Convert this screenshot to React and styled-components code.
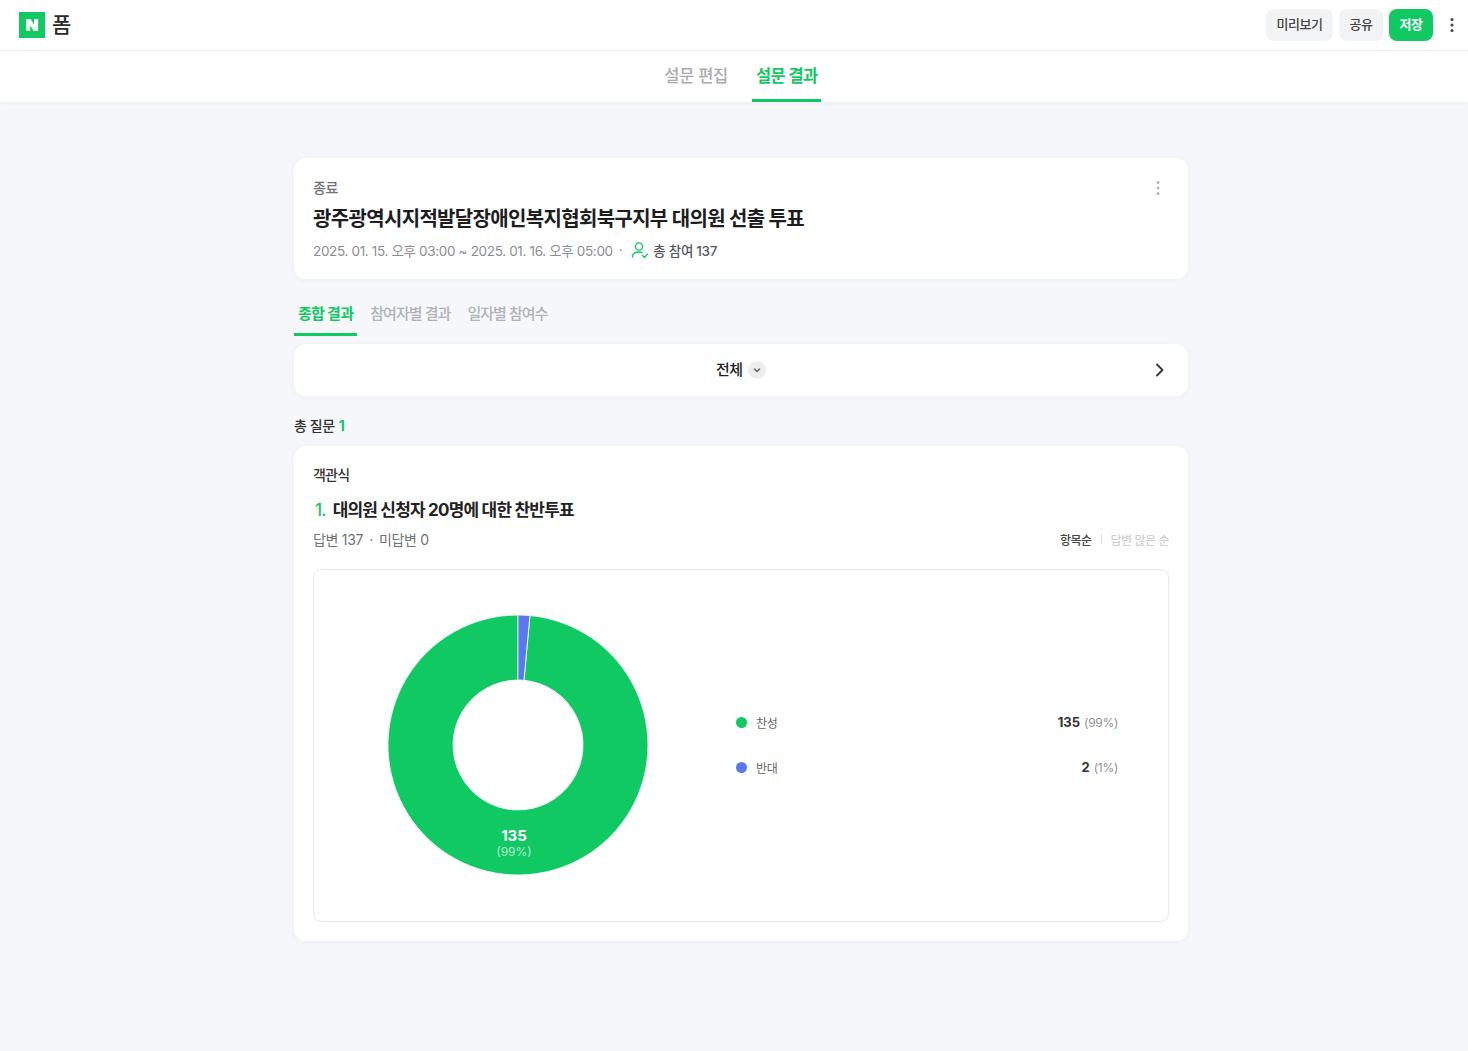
import React from 'react';
import styled, { createGlobalStyle } from 'styled-components';

const GREEN = '#10c963';
const BLUE = '#5a78ea';

const GlobalStyle = createGlobalStyle`
  html, body {
    margin: 0;
    padding: 0;
    background: #f6f7fb;
    font-family: Inter, "Noto Sans CJK KR", "Noto Sans", sans-serif;
    color: #222;
  }
  * { box-sizing: border-box; }
`;

const Page = styled.div`
  width: 1468px;
  min-height: 1051px;
  background: #f6f7fb;
`;

const TopBar = styled.header`
  height: 51px;
  padding: 0 3px 0 19px;
  display: flex;
  align-items: center;
  background: #fff;
  border-bottom: 1px solid #f0f1f3;
`;

const Brand = styled.div`
  display: flex;
  align-items: center;
  gap: 7px;
  flex: 1;
`;

const Logo = styled.svg`
  width: 26px;
  height: 26px;
  display: block;
`;

const BrandName = styled.span`
  font-size: 21px;
  font-weight: 500;
  line-height: 27px;
  padding-bottom: 2px;
  color: #2b2b2b;
`;

const TopActions = styled.div`
  display: flex;
  align-items: center;
  gap: 6px;
`;

const TopButton = styled.button`
  width: ${(p) => p.$w}px;
  height: 32px;
  padding: 0 0 3px;
  border: 0;
  border-radius: 8px;
  font-family: inherit;
  font-size: 13px;
  font-weight: ${(p) => (p.$primary ? 700 : 500)};
  letter-spacing: -0.4px;
  color: ${(p) => (p.$primary ? '#fff' : '#444')};
  background: ${(p) => (p.$primary ? GREEN : '#f2f3f5')};
`;

const MoreBtn = styled.span`
  width: 26px;
  height: 32px;
  display: flex;
  align-items: center;
  justify-content: center;
  color: #444;
`;

const MainTabs = styled.nav`
  height: 51px;
  display: flex;
  justify-content: center;
  gap: 21px;
  padding-left: 14px;
  background: #fff;
  box-shadow: 0 1px 4px rgba(30, 40, 60, 0.05);
`;

const MainTab = styled.div`
  height: 51px;
  padding: 0 3.5px;
  display: flex;
  align-items: center;
  font-size: 16.5px;
  font-weight: ${(p) => (p.$active ? 700 : 500)};
  letter-spacing: ${(p) => (p.$active ? -0.6 : -0.3)}px;
  color: ${(p) => (p.$active ? GREEN : '#a9abae')};
  border-bottom: 3px solid ${(p) => (p.$active ? GREEN : 'transparent')};
`;

const Content = styled.main`
  width: 894px;
  margin: 56px 0 0 294px;
`;

const Card = styled.section`
  background: #fff;
  border-radius: 12px;
  box-shadow: 0 1px 6px rgba(40, 50, 70, 0.05);
`;

const SummaryCard = styled(Card)`
  height: 121px;
  padding: 19px 20px 0 19px;
  position: relative;
`;

const Status = styled.div`
  font-size: 14px;
  font-weight: 500;
  line-height: 21px;
  letter-spacing: -0.4px;
  color: #6f7276;
`;

const Title = styled.h1`
  margin: 7px 0 0;
  font-size: 20px;
  font-weight: 700;
  line-height: 28px;
  letter-spacing: -0.67px;
  color: #1d1d1f;
`;

const MetaRow = styled.div`
  margin-top: 6px;
  display: flex;
  align-items: center;
  height: 22px;
  font-size: 13.5px;
  letter-spacing: -0.34px;
  color: #8b8e92;
`;

const MetaDot = styled.span`
  margin: 0 9px 0 6px;
  color: #8b8e92;
`;

const Joined = styled.span`
  margin-left: 4px;
  color: #55585c;
  letter-spacing: -0.3px;
  font-weight: 500;
`;

const CardMore = styled.span`
  position: absolute;
  top: 19px;
  right: 17px;
  width: 26px;
  height: 22px;
  display: flex;
  align-items: center;
  justify-content: center;
  color: #b5b7ba;
`;

const SubTabs = styled.div`
  margin-top: 16px;
  height: 41px;
  display: flex;
  gap: 9px;
`;

const SubTab = styled.div`
  height: 41px;
  padding: 0 4px 4px;
  display: flex;
  align-items: center;
  font-size: 15px;
  font-weight: ${(p) => (p.$active ? 700 : 500)};
  letter-spacing: ${(p) => (p.$active ? -0.7 : -0.95)}px;
  color: ${(p) => (p.$active ? GREEN : '#b0b2b5')};
  border-bottom: 3px solid ${(p) => (p.$active ? GREEN : 'transparent')};
`;

const FilterCard = styled(Card)`
  margin-top: 8px;
  height: 52px;
  padding: 0 20px 0 0;
  display: flex;
  align-items: center;
  position: relative;
  justify-content: flex-end;
`;

const FilterCenter = styled.div`
  position: absolute;
  left: 422px;
  top: 0;
  height: 48px;
  display: flex;
  align-items: center;
  gap: 6px;
  font-size: 15px;
  font-weight: 500;
  letter-spacing: -0.6px;
  color: #222;
`;

const ChevronBadge = styled.span`
  width: 18px;
  height: 18px;
  margin-top: 3px;
  border-radius: 50%;
  background: #eceded;
  display: flex;
  align-items: center;
  justify-content: center;
  color: #666;
`;

const TotalRow = styled.div`
  margin-top: 19px;
  height: 20px;
  display: flex;
  align-items: center;
  gap: 4px;
  font-size: 14px;
  font-weight: 500;
  letter-spacing: -0.4px;
  color: #333;
`;

const TotalNum = styled.span`
  color: ${GREEN};
  font-weight: 700;
`;

const QuestionCard = styled(Card)`
  margin-top: 11px;
  height: 495px;
  padding: 18px 19px 0 19px;
`;

const QType = styled.div`
  font-size: 14px;
  font-weight: 500;
  line-height: 21px;
  letter-spacing: -0.8px;
  color: #333;
`;

const QTitle = styled.h2`
  margin: 12px 0 0;
  font-size: 17px;
  font-weight: 700;
  line-height: 26px;
  letter-spacing: -0.8px;
  color: #222;
`;

const QNum = styled.span`
  color: ${GREEN};
  font-weight: 500;
  margin: 0 7px 0 2px;
`;

const QMeta = styled.div`
  margin-top: 5px;
  height: 22px;
  display: flex;
  align-items: center;
  justify-content: space-between;
`;

const Answers = styled.div`
  display: flex;
  align-items: center;
  font-size: 14px;
  letter-spacing: -0.3px;
  color: #6f7276;
`;

const AnswerDot = styled.span`
  margin: 0 6px;
`;

const Sort = styled.div`
  display: flex;
  align-items: center;
  font-size: 12px;
  letter-spacing: -0.5px;
`;

const SortItem = styled.span`
  font-weight: ${(p) => (p.$active ? 500 : 400)};
  color: ${(p) => (p.$active ? '#444' : '#c6c8ca')};
`;

const SortBar = styled.span`
  width: 1px;
  height: 10px;
  margin: 0 9px;
  background: #dcdde0;
`;

const ChartBox = styled.div`
  margin-top: 19px;
  height: 353px;
  border: 1px solid #e9eaec;
  border-radius: 8px;
  padding: 0 50px 2px 74px;
  display: flex;
  align-items: center;
  gap: 88px;
`;

const DonutWrap = styled.div`
  position: relative;
  width: 260px;
  height: 260px;
  flex: none;
`;

const Donut = styled.svg`
  display: block;
  width: 260px;
  height: 260px;
`;

const SliceLabel = styled.div`
  position: absolute;
  left: 96px;
  top: 212px;
  width: 60px;
  text-align: center;
  color: #fff;
`;

const SliceCount = styled.div`
  font-size: 15px;
  font-weight: 700;
  line-height: 18px;
`;

const SlicePct = styled.div`
  font-size: 12px;
  line-height: 14px;
  opacity: 0.65;
`;

const Legend = styled.ul`
  flex: 1;
  margin: 0;
  padding: 0;
  list-style: none;
  display: flex;
  flex-direction: column;
  gap: 25px;
`;

const LegendRow = styled.li`
  height: 20px;
  display: flex;
  align-items: center;
  justify-content: space-between;
`;

const LegendName = styled.span`
  display: flex;
  align-items: center;
  gap: 9px;
  font-size: 12px;
  letter-spacing: -0.3px;
  color: #666;
`;

const Dot = styled.i`
  width: 11px;
  height: 11px;
  border-radius: 50%;
  background: ${(p) => p.$color};
`;

const LegendValue = styled.span`
  font-size: 13px;
  font-weight: 700;
  color: #333;
`;

const LegendPct = styled.span`
  margin-left: 4px;
  font-size: 12px;
  font-weight: 400;
  letter-spacing: -0.3px;
  color: #8f9195;
`;

const Kebab = ({ size = 3 }) => (
  <svg width="4" height="16" viewBox="0 0 4 16" fill="currentColor">
    <circle cx="2" cy="2.5" r={size / 2} />
    <circle cx="2" cy="8" r={size / 2} />
    <circle cx="2" cy="13.5" r={size / 2} />
  </svg>
);

// slice path between two angles, measured clockwise from 12 o'clock
const slicePath = (from, to, R, r) => {
  const pt = (a, rad) => {
    const t = (a * Math.PI) / 180;
    return `${(130 + rad * Math.sin(t)).toFixed(2)} ${(130 - rad * Math.cos(t)).toFixed(2)}`;
  };
  const large = to - from > 180 ? 1 : 0;
  return `M${pt(from, R)} A${R} ${R} 0 ${large} 1 ${pt(to, R)} L${pt(to, r)} A${r} ${r} 0 ${large} 0 ${pt(from, r)} Z`;
};

const BLUE_DEG = (2 / 137) * 360;

export default function App() {
  return (
    <Page>
      <GlobalStyle />
      <TopBar>
        <Brand>
          <Logo viewBox="0 0 26 26">
            <rect width="26" height="26" fill={GREEN} />
            <path d="M7 7h4.6l3.4 5.4V7h4.2v12h-4.6l-3.4-5.4V19H7z" fill="#f2fff7" />
          </Logo>
          <BrandName>폼</BrandName>
        </Brand>
        <TopActions>
          <TopButton $w={67}>미리보기</TopButton>
          <TopButton $w={44}>공유</TopButton>
          <TopButton $w={44} $primary>저장</TopButton>
          <MoreBtn><Kebab /></MoreBtn>
        </TopActions>
      </TopBar>

      <MainTabs>
        <MainTab>설문 편집</MainTab>
        <MainTab $active>설문 결과</MainTab>
      </MainTabs>

      <Content>
        <SummaryCard>
          <Status>종료</Status>
          <Title>광주광역시지적발달장애인복지협회북구지부 대의원 선출 투표</Title>
          <MetaRow>
            2025. 01. 15. 오후 03:00 ~ 2025. 01. 16. 오후 05:00
            <MetaDot>·</MetaDot>
            <svg width="18" height="18" viewBox="0 0 18 18" fill="none" stroke={GREEN} strokeWidth="1.4" strokeLinecap="round" strokeLinejoin="round">
              <circle cx="8" cy="5.5" r="3.6" />
              <path d="M1.5 16c0-3 2.6-5 6.5-5 1.2 0 2.2.2 3 .5" />
              <path d="M11.5 14.5l2 2 3-3.4" />
            </svg>
            <Joined>총 참여 137</Joined>
          </MetaRow>
          <CardMore><Kebab /></CardMore>
        </SummaryCard>

        <SubTabs>
          <SubTab $active>종합 결과</SubTab>
          <SubTab>참여자별 결과</SubTab>
          <SubTab>일자별 참여수</SubTab>
        </SubTabs>

        <FilterCard>
          <FilterCenter>
            전체
            <ChevronBadge>
              <svg width="10" height="10" viewBox="0 0 10 10" fill="none" stroke="currentColor" strokeWidth="1.6" strokeLinecap="round" strokeLinejoin="round">
                <path d="M2.5 4l2.5 2.5L7.5 4" />
              </svg>
            </ChevronBadge>
          </FilterCenter>
          <svg width="16" height="16" viewBox="0 0 16 16" fill="none" stroke="#333" strokeWidth="1.8" strokeLinecap="round" strokeLinejoin="round">
            <path d="M5 2.5L10.5 8 5 13.5" />
          </svg>
        </FilterCard>

        <TotalRow>
          총 질문 <TotalNum>1</TotalNum>
        </TotalRow>

        <QuestionCard>
          <QType>객관식</QType>
          <QTitle><QNum>1.</QNum>대의원 신청자 20명에 대한 찬반투표</QTitle>
          <QMeta>
            <Answers>답변 137<AnswerDot>·</AnswerDot>미답변 0</Answers>
            <Sort>
              <SortItem $active>항목순</SortItem>
              <SortBar />
              <SortItem>답변 많은 순</SortItem>
            </Sort>
          </QMeta>
          <ChartBox>
            <DonutWrap>
              <Donut viewBox="0 0 260 260">
                <path d={slicePath(BLUE_DEG, 360, 130, 65)} fill={GREEN} stroke="#fff" strokeWidth="0.8" />
                <path d={slicePath(0, BLUE_DEG, 130, 65)} fill={BLUE} stroke="#fff" strokeWidth="0.8" />
              </Donut>
              <SliceLabel>
                <SliceCount>135</SliceCount>
                <SlicePct>(99%)</SlicePct>
              </SliceLabel>
            </DonutWrap>
            <Legend>
              <LegendRow>
                <LegendName><Dot $color={GREEN} />찬성</LegendName>
                <LegendValue>135<LegendPct>(99%)</LegendPct></LegendValue>
              </LegendRow>
              <LegendRow>
                <LegendName><Dot $color={BLUE} />반대</LegendName>
                <LegendValue>2<LegendPct>(1%)</LegendPct></LegendValue>
              </LegendRow>
            </Legend>
          </ChartBox>
        </QuestionCard>
      </Content>
    </Page>
  );
}
